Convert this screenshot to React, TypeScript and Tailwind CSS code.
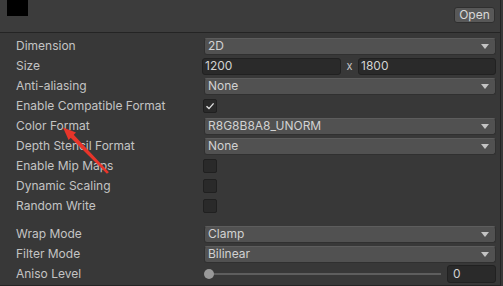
import type { ReactNode } from 'react';

const Caret = () => (
  <svg className="w-[8px] h-[5px] shrink-0" viewBox="0 0 8 5">
    <path d="M0 0h8L4 5z" fill="#c4c4c4" />
  </svg>
);

const Tick = () => (
  <svg className="w-[10px] h-[10px]" viewBox="0 0 10 10" fill="none">
    <path d="M1.5 5.2 4 7.6 8.6 2.4" stroke="#e0e0e0" strokeWidth={1.4} />
  </svg>
);

function Row({ label, children }: { label: string; children?: ReactNode }) {
  return (
    <div className="flex items-center h-[20px]">
      <div className="w-[204px] pl-[16px] text-[12px] text-[#c4c4c4] whitespace-nowrap">{label}</div>
      <div className="w-[292px] flex items-center">{children}</div>
    </div>
  );
}

function Dropdown({ value }: { value: string }) {
  return (
    <div className="flex-1 h-[17px] flex items-center justify-between pl-[3px] pr-[6px] bg-[#515151] border border-[#303030] border-t-[#5d5d5d] rounded-[3px] text-[12px] text-[#d2d2d2]">
      <span>{value}</span>
      <Caret />
    </div>
  );
}

function Field({ value, className = '' }: { value: string; className?: string }) {
  return (
    <div className={`h-[17px] flex items-center pl-[2px] bg-[#2a2a2a] border border-[#212121] rounded-[3px] text-[12px] text-[#d2d2d2] ${className}`}>
      {value}
    </div>
  );
}

function Check({ on = false }: { on?: boolean }) {
  return (
    <div className="w-[14px] h-[14px] -ml-[1px] flex items-center justify-center bg-[#2a2a2a] border border-[#202020] rounded-[2px]">
      {on && <Tick />}
    </div>
  );
}

export default function App() {
  return (
    <div
      className="w-[503px] h-[286px] flex bg-[#383838] relative overflow-hidden"
      style={{ fontFamily: 'Inter, "Noto Sans", sans-serif' }}
    >
      <div className="w-[500px] flex flex-col">
        <div className="h-[33px] flex justify-between items-start bg-[#3c3c3c] border-b border-[#242424]">
          <div className="ml-[7px] w-[21px] h-[16px] bg-black" />
          <button className="mt-[7px] mr-[5px] w-[41px] h-[16px] bg-[#585858] rounded-[3px] text-[12px] leading-none text-[#d8d8d8] border border-[#2f2f2f]">
            Open
          </button>
        </div>

        <div className="pt-[3px] flex flex-col">
          <Row label="Dimension">
            <Dropdown value="2D" />
          </Row>
          <Row label="Size">
            <Field value="1200" className="-ml-[2px] w-[139px]" />
            <span className="w-[17px] text-center text-[11px] text-[#c4c4c4]">x</span>
            <Field value="1800" className="flex-1" />
          </Row>
          <Row label="Anti-aliasing">
            <Dropdown value="None" />
          </Row>
          <Row label="Enable Compatible Format">
            <Check on />
          </Row>
          <Row label="Color Format">
            <Dropdown value="R8G8B8A8_UNORM" />
          </Row>
          <Row label="Depth Stencil Format">
            <Dropdown value="None" />
          </Row>
          <Row label="Enable Mip Maps">
            <Check />
          </Row>
          <Row label="Dynamic Scaling">
            <Check />
          </Row>
          <Row label="Random Write">
            <Check />
          </Row>

          <div className="h-[8px]" />

          <Row label="Wrap Mode">
            <Dropdown value="Clamp" />
          </Row>
          <Row label="Filter Mode">
            <Dropdown value="Bilinear" />
          </Row>
          <Row label="Aniso Level">
            <div className="flex-1 flex items-center gap-[6px]">
              <div className="relative flex-1 h-[10px] flex items-center">
                <div className="ml-[4px] flex-1 h-[2px] bg-[#5e5e5e]" />
                <div className="absolute left-0 top-0 w-[10px] h-[10px] rounded-full bg-[#999999]" />
              </div>
              <Field value="0" className="w-[49px] h-[18px] pl-[5px]" />
            </div>
          </Row>
          <div className="mt-[1px] border-t border-[#242424]" />
        </div>
      </div>
      <div className="w-[1px] bg-[#242424]" />

      {/* red annotation arrow */}
      <svg className="absolute left-0 top-0 pointer-events-none" width="503" height="286">
        <polygon points="108.9,172.2 106.9,173.8 68.4,135.6 71.6,132.4" fill="#e8352a" />
        <polygon points="63,127.5 76,132.5 68.6,140" fill="#e8352a" />
      </svg>
    </div>
  );
}
